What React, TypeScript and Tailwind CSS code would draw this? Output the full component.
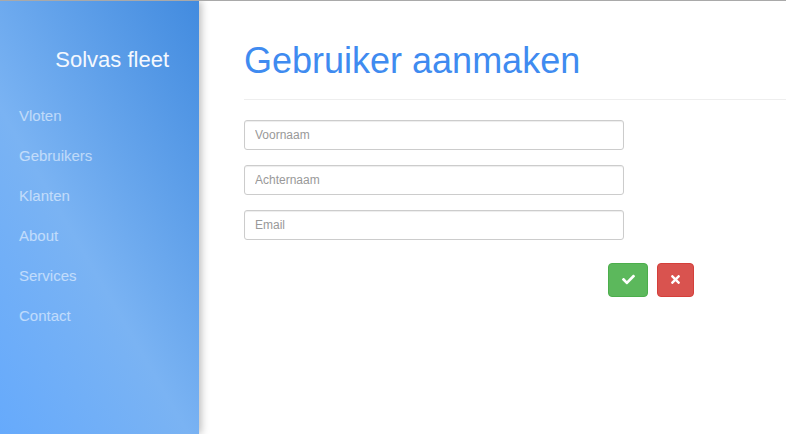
import React from "react";
import { FaCheck, FaTimes } from "react-icons/fa";

const MENU = ["Vloten", "Gebruikers", "Klanten", "About", "Services", "Contact"];
const FIELDS = ["Voornaam", "Achternaam", "Email"];

export default function App() {
  return (
    <div
      className="h-[434px] w-full overflow-hidden bg-white border-t border-[#a9a9a9] flex"
      style={{ fontFamily: '"Liberation Sans", Arial, sans-serif' }}
    >
      <aside className="w-[199px] shrink-0 h-full bg-[linear-gradient(60deg,#66aafc_0%,#7ab3f3_42%,#428bdf_100%)] shadow-[2px_0_8px_rgba(0,0,0,0.28)] relative z-10">
        <div className="mt-[45px] h-[28px] leading-[28px] text-[22px] text-[#f4f8fe] text-right pr-[30px]">
          Solvas fleet
        </div>
        <ul className="mt-[22px]">
          {MENU.map((item) => (
            <li key={item} className="h-[40px] leading-[40px] pl-[19px] text-[15px] text-white/55">
              {item}
            </li>
          ))}
        </ul>
      </aside>

      <main className="flex-1 pl-[45px]">
        <div className="mt-[40px] pb-[18px] border-b border-[#eeeeee]">
          <h1 className="text-[36px] leading-[39.6px] text-[#3f8bf0]">Gebruiker aanmaken</h1>
        </div>

        <form className="mt-[20px] flex flex-col gap-[15px]">
          {FIELDS.map((field) => (
            <input
              key={field}
              type="text"
              placeholder={field}
              className="w-[380px] h-[30px] px-[10px] text-[12px] border border-[#cccccc] rounded-[3px] shadow-[inset_0_1px_1px_rgba(0,0,0,0.075)] placeholder:text-[#999999] outline-none"
            />
          ))}
        </form>

        <div className="mt-[23px] ml-[364px] flex gap-[9px]">
          <button className="w-[40px] h-[34px] rounded-[4px] bg-[#5cb85c] border border-[#4cae4c] flex items-center justify-center text-white">
            <FaCheck size={13} />
          </button>
          <button className="w-[37px] h-[34px] rounded-[4px] bg-[#d9534f] border border-[#d43f3a] flex items-center justify-center text-white">
            <FaTimes size={13} />
          </button>
        </div>
      </main>
    </div>
  );
}
